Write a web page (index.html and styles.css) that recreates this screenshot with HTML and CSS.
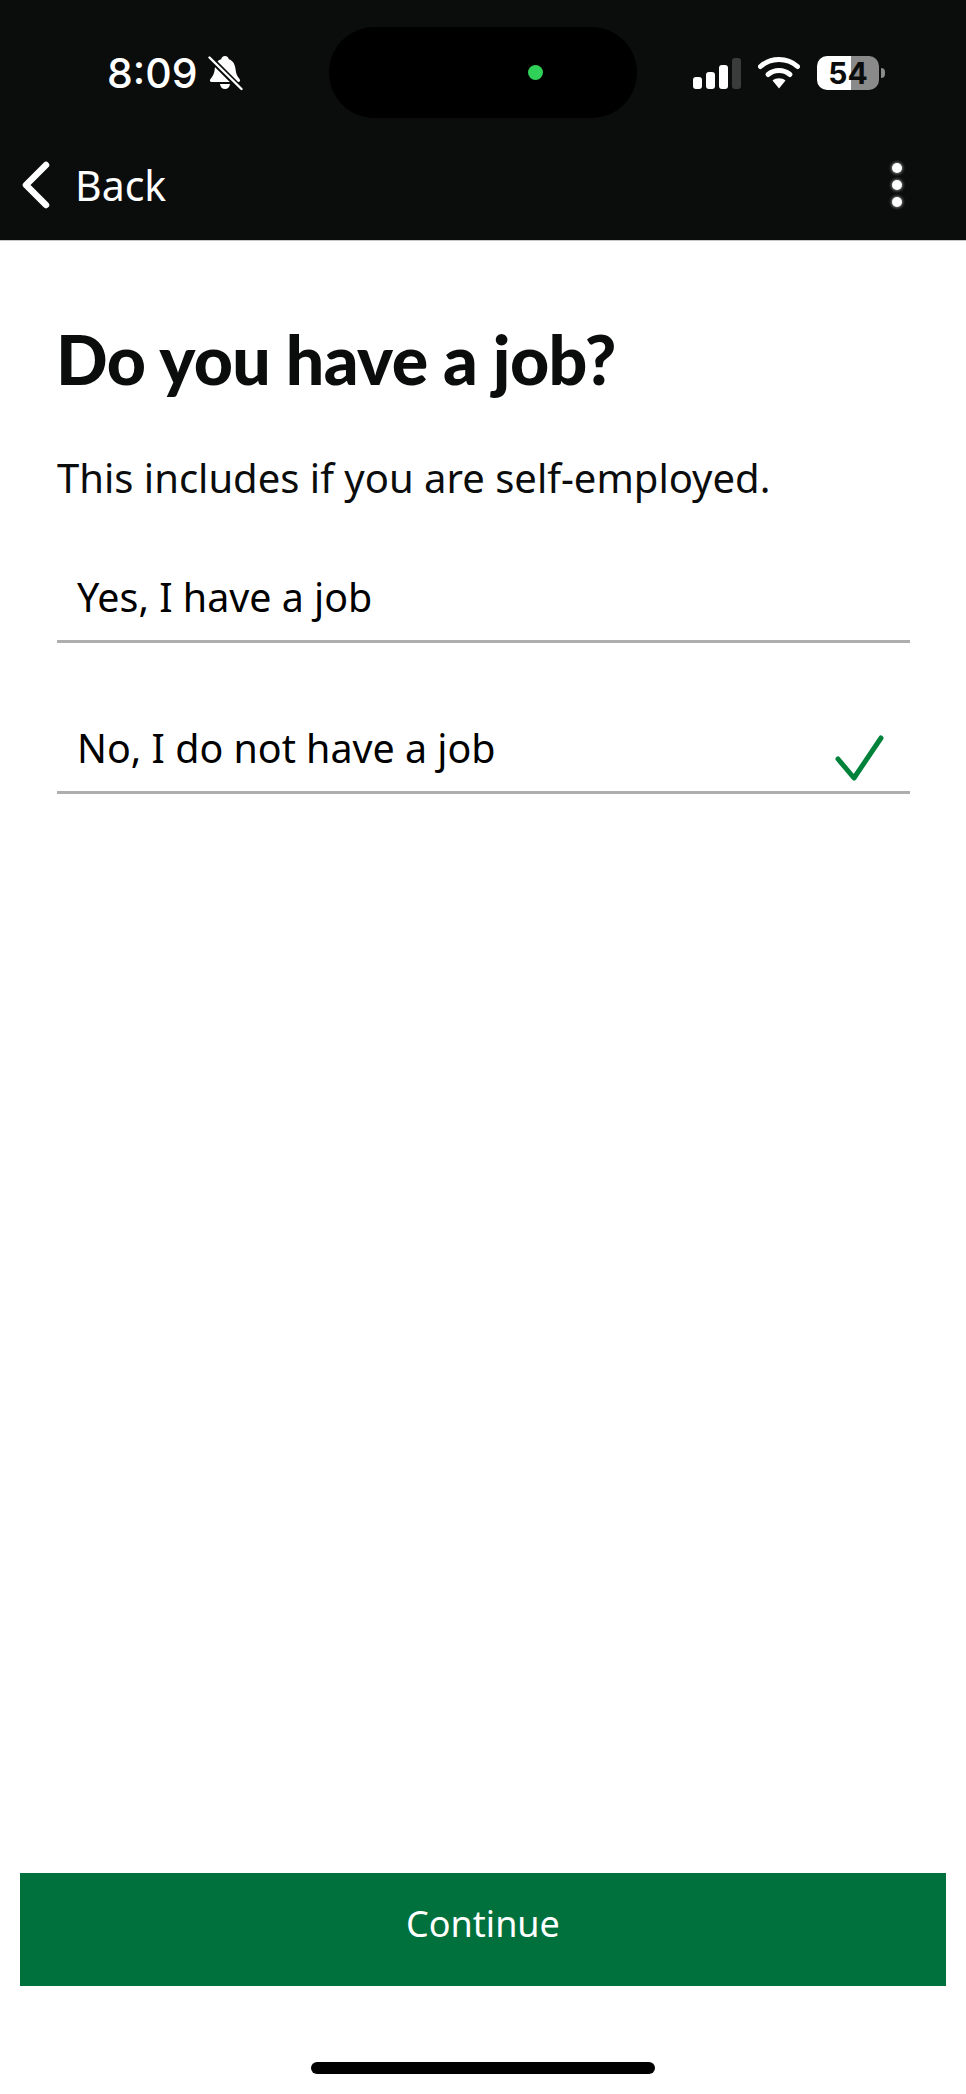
FILE: index.html
```html
<!DOCTYPE html>
<html lang="en">
<head>
<meta charset="utf-8">
<title>Do you have a job?</title>
<link rel="stylesheet" href="styles.css">
</head>
<body>
<div class="page">
  <header class="header">
    <div class="status">
      <div class="status-left">
        <span class="time">8:09</span>
        <svg class="bell" width="35" height="36" viewBox="0 0 35 36">
          <path d="M17 1c2.200 0 3.500 1.500 3.800 3.200 4.200 1.300 6.200 5 6.700 9.800.4 4 1.300 7 4.200 10.300.9 1.100.3 2.700-1.300 2.700H3.600c-1.600 0-2.200-1.600-1.300-2.700C5.200 21 6.500 18 6.800 13.500 7.200 9 9.200 5.500 13.200 4.200 13.500 2.500 14.800 1 17 1z" fill="#fff"/>
          <path d="M12 29h10c-.3 3-2.300 5-5 5s-4.700-2-5-5z" fill="#fff"/>
          <path d="M2 3l30 30" stroke="#0b0c0c" stroke-width="6"/>
          <path d="M1.500 2.500l32 31.500" stroke="#fff" stroke-width="2.400" stroke-linecap="round"/>
        </svg>
      </div>
      <div class="island"><span class="mic-dot"></span></div>
      <div class="status-right">
        <div class="signal">
          <span class="bar bar-1"></span>
          <span class="bar bar-2"></span>
          <span class="bar bar-3"></span>
          <span class="bar bar-4"></span>
        </div>
        <svg class="wifi" width="42" height="32" viewBox="0 0 42 32">
          <path d="M2.500 9.500C7.500 5 14 2.500 21 2.500S34.500 5 39.500 9.500" fill="none" stroke="#fff" stroke-width="5" stroke-linecap="round"/>
          <path d="M10 17.500C13 15 17 13.500 21 13.500S29 15 32 17.500" fill="none" stroke="#fff" stroke-width="5" stroke-linecap="round"/>
          <path d="M14.500 23.500c1.800-1.400 4-2.200 6.500-2.200s4.700.8 6.500 2.200L21 31.500z" fill="#fff"/>
        </svg>
        <div class="battery">
          <div class="battery-body"><span class="battery-level">54</span></div>
          <span class="battery-cap"></span>
        </div>
      </div>
    </div>
    <nav class="nav">
      <a class="back">
        <svg class="chevron" width="30" height="48" viewBox="0 0 30 48">
          <path d="M25 4L5 24l20 20" fill="none" stroke="#fff" stroke-width="6.500" stroke-linecap="round" stroke-linejoin="round"/>
        </svg>
        <span class="back-label">Back</span>
      </a>
      <div class="menu">
        <span class="dot"></span>
        <span class="dot"></span>
        <span class="dot"></span>
      </div>
    </nav>
  </header>

  <main class="content">
    <h1 class="title">Do you have a job?</h1>
    <p class="hint">This includes if you are self-employed.</p>
    <ul class="options">
      <li class="option">Yes, I have a job</li>
      <li class="option">No, I do not have a job
        <svg class="tick" width="50" height="48" viewBox="0 0 50 48">
          <path d="M3 24l16 19L46 3" fill="none" stroke="#00823b" stroke-width="5" stroke-linecap="round" stroke-linejoin="round"/>
        </svg>
      </li>
    </ul>
  </main>

  <div class="actions">
    <button class="continue" type="button">Continue</button>
  </div>
  <div class="home-area"><span class="home-bar"></span></div>
</div>
</body>
</html>
```
FILE: styles.css
```css
* { box-sizing: border-box; }
html, body { margin: 0; padding: 0; background: #fff; }
.page {
  width: 966px;
  height: 2094px;
  display: flex;
  flex-direction: column;
  font-family: "Noto Sans", "Liberation Sans", sans-serif;
  color: #0b0c0c;
}
.header {
  height: 241px;
  flex: none;
  background: #0b0c0c;
  border-bottom: 1px solid #c8c8c8;
  color: #fff;
}
.status {
  display: flex;
  align-items: flex-start;
  padding-top: 27px;
  height: 118px;
}
.status-left {
  width: 329px;
  height: 91px;
  padding-left: 107px;
  display: flex;
  align-items: center;
  gap: 10px;
}
.time {
  font-family: Inter, "Liberation Sans", sans-serif;
  font-size: 41px;
  font-weight: 500;
  line-height: 46px;
}
.bell { flex: none; }
.island {
  width: 308px;
  height: 91px;
  background: #000;
  border-radius: 46px;
  display: flex;
  align-items: center;
  padding-left: 199px;
}
.mic-dot {
  width: 15px;
  height: 15px;
  border-radius: 50%;
  background: #30d158;
}
.status-right {
  margin-left: 56px;
  height: 91px;
  display: flex;
  align-items: center;
  gap: 17px;
}
.signal {
  display: flex;
  align-items: flex-end;
  gap: 4px;
  height: 32px;
}
.bar {
  width: 9px;
  border-radius: 3px;
  background: #fff;
}
.bar-1 { height: 12px; }
.bar-2 { height: 17px; }
.bar-3 { height: 24px; }
.bar-4 { height: 31px; background: #3a3b3b; }
.battery {
  display: flex;
  align-items: center;
  gap: 2px;
}
.battery-body {
  width: 62px;
  height: 34px;
  border-radius: 10px;
  background: linear-gradient(90deg, #fff 0 55%, #8a8a8a 55% 100%);
  display: flex;
  align-items: center;
  justify-content: center;
}
.battery-level {
  font-family: Inter, "Liberation Sans", sans-serif;
  font-size: 30px;
  font-weight: 700;
  color: #0b0c0c;
  line-height: 34px;
}
.battery-cap {
  width: 4px;
  height: 10px;
  background: #8a8a8a;
  border-radius: 0 5px 5px 0;
}
.nav {
  height: 122px;
  display: flex;
  align-items: flex-start;
  justify-content: space-between;
  padding: 43px 64px 0 21px;
}
.back {
  display: flex;
  align-items: center;
  gap: 24px;
  height: 48px;
}
.back-label {
  font-size: 41px;
  line-height: 48px;
}
.menu {
  display: flex;
  flex-direction: column;
  gap: 7px;
  padding-top: 2px;
}
.dot {
  width: 10px;
  height: 10px;
  border-radius: 50%;
  background: #fff;
  box-shadow: 0 0 3px 1px rgba(255, 255, 255, 0.45);
}
.content {
  flex: 1;
  padding: 74px 56px 0 57px;
}
.title {
  margin: 0 0 0 -1px;
  font-family: Lato, "Noto Sans", sans-serif;
  font-size: 68px;
  font-weight: 900;
  line-height: 88px;
  letter-spacing: -0.6px;
}
.hint {
  margin: 47px 0 0;
  font-size: 40px;
  line-height: 56px;
}
.options {
  list-style: none;
  margin: 62px 0 0;
  padding: 0;
}
.option {
  position: relative;
  height: 75px;
  padding-left: 20px;
  padding-top: 1px;
  border-bottom: 3px solid #aeaeae;
  font-size: 39.400px;
  line-height: 56px;
  color: #000;
}
.option + .option { margin-top: 76px; }
.tick {
  position: absolute;
  right: 25px;
  top: 16px;
}
.actions {
  flex: none;
  padding: 0 20px;
}
.continue {
  display: block;
  width: 100%;
  height: 113px;
  border: 0;
  padding: 0 0 13px;
  background: #00703c;
  color: #fff;
  font-family: "Noto Sans", "Liberation Sans", sans-serif;
  font-size: 36px;
}
.home-area {
  flex: none;
  height: 108px;
  display: flex;
  justify-content: center;
  padding-top: 76px;
}
.home-bar {
  width: 344px;
  height: 12px;
  border-radius: 6px;
  background: #000;
}
```
